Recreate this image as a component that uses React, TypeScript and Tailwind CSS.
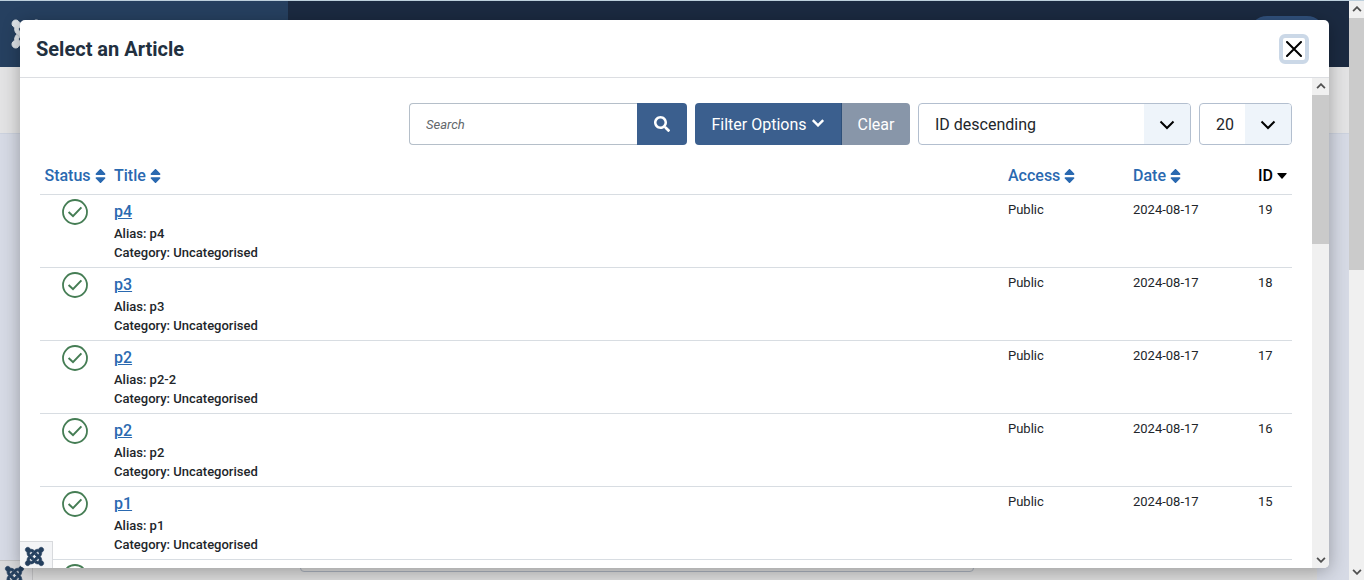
import { useState } from 'react'
import { FaJoomla, FaSearch, FaSort } from 'react-icons/fa'

interface Article {
  id: number
  title: string
  alias: string
}

const articles: Article[] = [
  { id: 19, title: 'p4', alias: 'p4' },
  { id: 18, title: 'p3', alias: 'p3' },
  { id: 17, title: 'p2', alias: 'p2-2' },
  { id: 16, title: 'p2', alias: 'p2' },
  { id: 15, title: 'p1', alias: 'p1' },
  { id: 14, title: 'p1', alias: 'p1-2' },
]

function Chevron({ className, up = false }: { className: string; up?: boolean }) {
  return (
    <svg viewBox="0 0 16 10" className={className} fill="none" stroke="currentColor" aria-hidden="true">
      <path d={up ? 'M1.5 8.5 8 2l6.5 6.5' : 'M1.5 1.5 8 8l6.5-6.5'} />
    </svg>
  )
}

function Published() {
  return (
    <svg viewBox="0 0 26 26" className="mx-auto block size-[26px]" fill="none" stroke="#457d54" role="img" aria-label="Published">
      <circle cx="13" cy="13" r="12" strokeWidth="1.8" />
      <path d="M6.6 13 11 17.2 19.4 8.4" strokeWidth="2" />
    </svg>
  )
}

function SortHeading({ label }: { label: string }) {
  return (
    <a href="#sort" className="inline-flex items-center text-[#2a69b0]">
      {label}
      <FaSort className="ml-1 h-[18px] w-[11px]" preserveAspectRatio="none" />
    </a>
  )
}

function ScrollBar({ thumb }: { thumb: string }) {
  return (
    <div aria-hidden="true" className="flex w-full flex-col bg-[#f0f0f0] text-[#505050]">
      <div className="flex h-[17px] items-center justify-center pb-0.5">
        <Chevron up className="h-1.5 w-2.5 stroke-3" />
      </div>
      <div className={thumb} />
      <div className="mt-auto flex h-[17px] items-center justify-center">
        <Chevron className="h-1.5 w-2.5 stroke-3" />
      </div>
    </div>
  )
}

function Dropdown({ label, options, className, boxClass }: {
  label: string
  options: string[]
  className: string
  boxClass: string
}) {
  return (
    <div className={`relative h-[42px] overflow-hidden rounded border border-[#b3bfcf] bg-white ${className}`}>
      <select aria-label={label} className="h-full w-full appearance-none pt-0.5 pl-4 text-base text-[#22262a] outline-none">
        {options.map((o) => (
          <option key={o}>{o}</option>
        ))}
      </select>
      <span className={`pointer-events-none absolute inset-y-0 right-0 flex items-center justify-center bg-[#eef4fa] pt-0.5 text-black ${boxClass}`}>
        <Chevron className="h-2.5 w-4 stroke-2" />
      </span>
    </div>
  )
}

function Backdrop() {
  return (
    <div className="flex h-full border-t border-[#bccfdc]">
      <div className="flex min-w-0 flex-1 flex-col bg-[#d6dae5]">
        <header className="flex h-[66px] shrink-0 items-start justify-between bg-[#1b2a41]">
          <div className="flex h-full w-72 items-center bg-[#264060] pl-2.5">
            <FaJoomla className="size-8 stroke-[#dfe4e9] stroke-16 text-[#dfe4e9]" />
          </div>
          <div className="mt-[15px] mr-6 h-9 w-[76px] rounded-full bg-[#31527e]" />
        </header>
        <div className="h-[67px] shrink-0 border-b border-[#ccd2de] bg-[#e3e3e4]" />
        <main className="mr-8 ml-8 flex flex-1 flex-col justify-end bg-[#dbdbdb] pb-2">
          <div className="ml-[268px] h-10 w-[674px] rounded border border-[#a9b0bc] bg-[#dbdbdb]" />
        </main>
      </div>
      <div className="flex w-[15px] shrink-0">
        <ScrollBar thumb="h-[252px] bg-[#cbcbcb]" />
      </div>
    </div>
  )
}

export default function App() {
  const [search, setSearch] = useState('')

  return (
    <div className="relative h-screen overflow-hidden font-['Roboto',sans-serif] text-[#22262a]">
      <Backdrop />
      <div className="absolute bottom-0 left-0 flex h-5 w-[33px] overflow-hidden border-t border-r border-[#c2c2c4] bg-[#dadadc] pt-1 pl-1">
        <FaJoomla className="size-[21px] shrink-0 stroke-[#243f5e] stroke-16 text-[#243f5e]" />
      </div>

      <div
        role="dialog"
        aria-labelledby="dialog-title"
        className="absolute top-5 right-[35px] bottom-3 left-5 flex flex-col overflow-hidden rounded-[5px] bg-white shadow-[0_3px_18px_rgba(0,0,0,0.3)]"
      >
        <div className="flex h-[58px] shrink-0 items-center justify-between border-b border-[#dcdee2] pr-5 pl-4">
          <h1 id="dialog-title" className="text-xl font-bold text-[#22303f]">Select an Article</h1>
          <button type="button" aria-label="Close" className="flex size-[30px] items-center justify-center rounded-md border-4 border-[#cbd8e7] text-black">
            <svg viewBox="0 0 16 16" className="size-4 shrink-0" fill="none" stroke="currentColor" strokeWidth="2" strokeLinecap="round">
              <path d="M1 1 15 15M15 1 1 15" />
            </svg>
          </button>
        </div>

        <div className="flex min-h-0 flex-1">
          <div className="min-w-0 flex-1 overflow-y-auto px-5 pt-[25px] [scrollbar-width:none]">
            <form className="flex justify-end gap-2" onSubmit={(e) => e.preventDefault()}>
              <div className="flex">
                <input
                  type="text"
                  aria-label="Search"
                  placeholder="Search"
                  value={search}
                  onChange={(e) => setSearch(e.target.value)}
                  className="h-[42px] w-[228px] rounded-l border border-r-0 border-[#b5bfc9] px-4 text-[13px] outline-none placeholder:text-[#63676b] placeholder:italic"
                />
                <button type="submit" aria-label="Search" className="flex w-[50px] items-center justify-center rounded-r bg-[#3b5f8e] text-white">
                  <FaSearch className="size-4" />
                </button>
              </div>
              <div className="flex text-base text-white">
                <button type="button" className="flex w-[147px] items-center justify-center gap-1 rounded-l border-r border-[#2e5079] bg-[#3b5f8e] pt-0.5">
                  Filter Options
                  <Chevron className="mb-1 h-2 w-3.5 stroke-3" />
                </button>
                <button type="button" onClick={() => setSearch('')} className="w-[68px] rounded-r bg-[#8896a9] pt-0.5">
                  Clear
                </button>
              </div>
              <Dropdown label="Sort by" options={['ID descending', 'ID ascending']} className="w-[273px]" boxClass="w-[46px]" />
              <Dropdown label="Articles per page" options={['20', '50', '100']} className="w-[93px]" boxClass="w-[46px]" />
            </form>

            <table className="mt-3 w-full table-fixed text-left">
              <colgroup>
                <col className="w-[70px]" />
                <col />
                <col className="w-[125px]" />
                <col className="w-[125px]" />
                <col className="w-[34px]" />
              </colgroup>
              <thead>
                <tr className="h-[37px] border-b border-[#d8dde2] align-middle text-base whitespace-nowrap [&>th]:px-0 [&>th]:pt-0.5 [&>th]:pb-0 [&>th]:font-medium">
                  <th className="text-center"><SortHeading label="Status" /></th>
                  <th><div className="pl-1"><SortHeading label="Title" /></div></th>
                  <th><SortHeading label="Access" /></th>
                  <th><SortHeading label="Date" /></th>
                  <th>
                    <a href="#sort" className="inline-flex items-center text-black">
                      ID
                      <svg viewBox="0 0 12 7" className="ml-1 h-1.5 w-2.5" fill="currentColor" aria-hidden="true">
                        <path d="M1 0h10q1 0 .6.9L6.6 6.6q-.6.6-1.2 0L.4.9Q0 0 1 0z" />
                      </svg>
                    </a>
                  </th>
                </tr>
              </thead>
              <tbody>
                {articles.map((a) => (
                  <tr key={a.id} className="h-[73px] border-b border-[#d8dde2] align-top text-[13px] leading-[19px]">
                    <td className="pt-1"><Published /></td>
                    <td className="py-[5px] pl-1">
                      <a href="#article" className="block w-fit text-base leading-6 font-medium text-[#2a69b0] underline">{a.title}</a>
                      <div className="font-medium">Alias: {a.alias}</div>
                      <div className="font-medium">Category: Uncategorised</div>
                    </td>
                    <td className="pt-[5px]">Public</td>
                    <td className="pt-[5px]">2024-08-17</td>
                    <td className="pt-[5px]">{a.id}</td>
                  </tr>
                ))}
              </tbody>
            </table>
          </div>
          <div className="flex w-[17px] shrink-0">
            <ScrollBar thumb="h-[149px] bg-[#cacaca]" />
          </div>
        </div>

        <div className="absolute bottom-0 left-0 flex h-[27px] w-[33px] border-t border-r border-[#d8dadd] bg-[#f3f4f6] pt-1 pl-1">
          <FaJoomla className="size-[21px] shrink-0 stroke-[#243f5e] stroke-16 text-[#243f5e]" />
        </div>
      </div>
    </div>
  )
}
